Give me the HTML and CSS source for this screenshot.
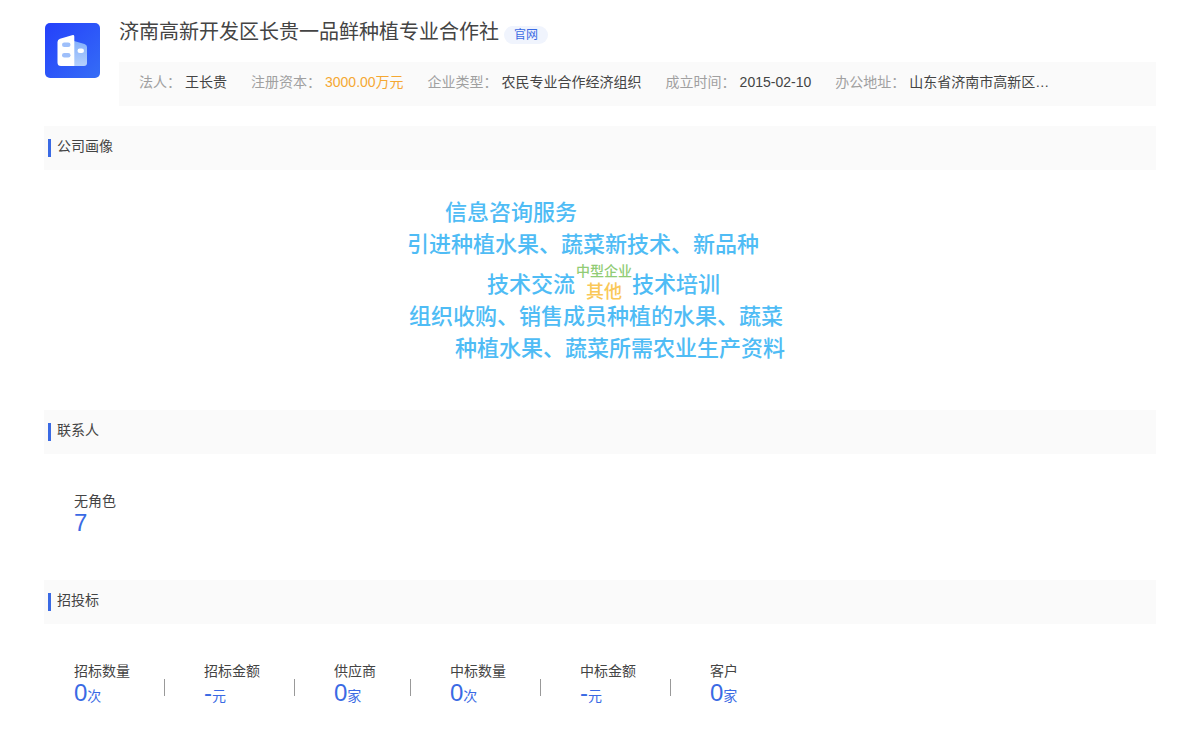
FILE: index.html
```html
<!DOCTYPE html>
<html lang="zh-CN">
<head>
<meta charset="utf-8">
<meta name="viewport" content="width=device-width, initial-scale=1">
<title>济南高新开发区长贵一品鲜种植专业合作社</title>
<link rel="stylesheet" href="styles.css">
</head>
<body>
<main class="page">
  <header class="company">
    <svg class="logo" viewBox="0 0 55 55" aria-hidden="true">
      <defs>
        <linearGradient id="tile" x1="0" y1="0" x2="1" y2="1">
          <stop offset="0" stop-color="#2440fb"/>
          <stop offset="1" stop-color="#356df6"/>
        </linearGradient>
        <linearGradient id="wing" x1="0" y1="0" x2="0" y2="1">
          <stop offset="0" stop-color="#84b0fb"/>
          <stop offset="1" stop-color="#b4d0fc"/>
        </linearGradient>
      </defs>
      <rect width="55" height="55" rx="5" fill="url(#tile)"/>
      <path d="M29 18 L39.5 21 Q42 21.800 42 24 V40 Q42 43 39 43 H29 Z" fill="url(#wing)"/>
      <path d="M12.500 19 Q12.500 16.500 15 15.700 L27 12.200 Q29.300 11.500 29.300 13.500 V43 H16 Q12.500 43 12.500 39.500 Z" fill="#fff"/>
      <rect x="17" y="19.500" width="8.500" height="4.500" rx="2.250" fill="#9ebffa"/>
      <rect x="17" y="30" width="8.500" height="4.500" rx="2.250" fill="#9ebffa"/>
      <rect x="32.500" y="25.500" width="6.500" height="4.500" rx="2.250" fill="#fff"/>
    </svg>
    <div class="company-main">
      <div class="title-row">
        <h1 class="title">济南高新开发区长贵一品鲜种植专业合作社</h1>
        <a class="site-link" href="#">官网</a>
      </div>
      <dl class="facts">
        <div class="fact"><dt>法人：</dt><dd>王长贵</dd></div>
        <div class="fact"><dt>注册资本：</dt><dd class="money">3000.00万元</dd></div>
        <div class="fact"><dt>企业类型：</dt><dd>农民专业合作经济组织</dd></div>
        <div class="fact"><dt>成立时间：</dt><dd>2015-02-10</dd></div>
        <div class="fact"><dt>办公地址：</dt><dd>山东省济南市高新区…</dd></div>
      </dl>
    </div>
  </header>

  <section>
    <h2 class="section-title">公司画像</h2>
    <div class="cloud-area">
      <div class="cloud">
        <span class="word w1">信息咨询服务</span>
        <span class="word w2">引进种植水果、蔬菜新技术、新品种</span>
        <span class="word w3">技术交流</span>
        <span class="word w4">中型企业</span>
        <span class="word w5">其他</span>
        <span class="word w6">技术培训</span>
        <span class="word w7">组织收购、销售成员种植的水果、蔬菜</span>
        <span class="word w8">种植水果、蔬菜所需农业生产资料</span>
      </div>
    </div>
  </section>

  <section>
    <h2 class="section-title">联系人</h2>
    <dl class="stats">
      <div class="stat"><dt>无角色</dt><dd>7</dd></div>
    </dl>
  </section>

  <section>
    <h2 class="section-title">招投标</h2>
    <dl class="stats">
      <div class="stat"><dt>招标数量</dt><dd>0<small>次</small></dd></div>
      <div class="stat"><dt>招标金额</dt><dd>-<small>元</small></dd></div>
      <div class="stat"><dt>供应商</dt><dd>0<small>家</small></dd></div>
      <div class="stat"><dt>中标数量</dt><dd>0<small>次</small></dd></div>
      <div class="stat"><dt>中标金额</dt><dd>-<small>元</small></dd></div>
      <div class="stat"><dt>客户</dt><dd>0<small>家</small></dd></div>
    </dl>
  </section>
</main>
</body>
</html>
```
FILE: styles.css
```css
* {
  box-sizing: border-box;
}

body {
  margin: 0;
  background: #fff;
  color: #444;
  font: 14px/20px "Liberation Sans", "Noto Sans CJK SC", sans-serif;
}

h1, h2, dl, dd {
  margin: 0;
  font-weight: 400;
}

.page {
  padding: 18px 44px 0;
}

.company {
  display: flex;
  gap: 19px;
  padding-left: 1px;
  margin-bottom: 20px;
}

.logo {
  flex: none;
  width: 55px;
  height: 55px;
  margin-top: 5px;
}

.company-main {
  flex: 1;
  min-width: 0;
}

.title-row {
  display: flex;
  align-items: flex-end;
  gap: 5px;
  margin-bottom: 16px;
}

.title {
  font-size: 20px;
  line-height: 28px;
}

.site-link {
  margin-bottom: 2px;
  padding: 0 10px;
  border-radius: 9px;
  background: #f0f4fd;
  color: #3a6ae4;
  font-size: 12px;
  line-height: 18px;
  text-decoration: none;
}

.facts {
  display: flex;
  flex-wrap: wrap;
  column-gap: 24px;
  padding: 10px 19px 14px 20px;
  background: #fafafa;
}

.fact {
  display: flex;
  gap: 4px;
}

.fact dt {
  color: #a0a0a0;
}

.fact .money {
  color: #f5a833;
}

.section-title {
  display: flex;
  align-items: flex-start;
  gap: 6px;
  height: 44px;
  padding: 10px 4px;
  background: #fafafa;
  font-size: 14px;
}

.section-title::before {
  content: "";
  width: 3px;
  height: 18px;
  margin-top: 3px;
  background: #3a6ae4;
}

.cloud-area {
  display: flex;
  justify-content: center;
  padding: 20px 0;
}

.cloud {
  position: relative;
  width: 400px;
  height: 200px;
}

.word {
  position: absolute;
  color: #4fbcf5;
  font-size: 22px;
  font-weight: 500;
  line-height: 32px;
  white-space: nowrap;
}

.w1 { left: 45px; top: 7px; }
.w2 { left: 7px; top: 39px; }
.w3 { left: 87px; top: 79px; }
.w4 { left: 176px; top: 71px; color: #91cc75; font-size: 14px; line-height: 20px; }
.w5 { left: 186px; top: 90px; color: #fac858; font-size: 18px; line-height: 24px; }
.w6 { left: 232px; top: 79px; }
.w7 { left: 9px; top: 111px; }
.w8 { left: 55px; top: 143px; }

.stats {
  display: flex;
  flex-wrap: wrap;
  padding: 36px 30px 46px;
}

.stat {
  display: grid;
  grid-template-columns: auto auto;
  column-gap: 34px;
  margin-right: 39px;
}

.stat dt {
  grid-column: 1;
  line-height: 22px;
}

.stat dd {
  grid-column: 1;
  color: #3a6ae4;
  font-size: 24px;
  line-height: 22px;
}

.stat small {
  font-size: 14px;
}

.stat:not(:last-child)::after {
  content: "";
  grid-column: 2;
  grid-row: 1 / 3;
  align-self: end;
  width: 1px;
  height: 17px;
  margin-bottom: 11px;
  background: #999;
}
```
